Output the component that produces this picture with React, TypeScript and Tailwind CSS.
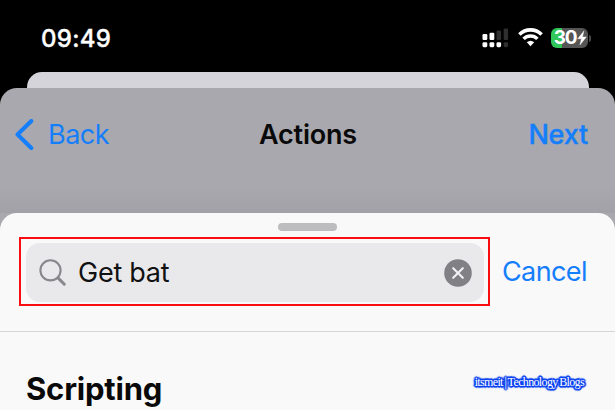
import React from "react";

function Signal() {
  return (
    <svg width="27" height="20" viewBox="0 0 27 20" fill="#fff">
      <rect x="0.5" y="6" width="4.8" height="6" rx="1.2" />
      <rect x="7.5" y="4.8" width="4.8" height="7.2" rx="1.2" />
      <rect x="14.5" y="2.5" width="4.6" height="9.5" rx="1.2" fill="#2f2f2f" />
      <rect x="21.7" y="0.5" width="4.4" height="11.5" rx="1.2" fill="#2f2f2f" />
      <rect x="0.5" y="14.2" width="4.8" height="5" rx="1.4" />
      <rect x="7.5" y="14.2" width="4.8" height="5" rx="1.4" />
      <rect x="14.5" y="14.2" width="4.6" height="5" rx="1.4" />
      <rect x="21.7" y="14.2" width="4.4" height="5" rx="1.4" fill="#2f2f2f" />
    </svg>
  );
}

function Wifi() {
  return (
    <svg width="25" height="19" viewBox="0 0 25 19" fill="none" stroke="#fff">
      <path d="M1.4 6.5 A15.6 15.6 0 0 1 23.6 6.5" strokeWidth="3.6" />
      <path d="M5.6 10.9 A9.6 9.6 0 0 1 19.4 10.9" strokeWidth="3.5" />
      <path d="M8.8 14.3 Q12.5 11.3 16.2 14.3 L12.5 18.3 Z" fill="#fff" stroke="none" />
    </svg>
  );
}

function Battery() {
  return (
    <div className="flex items-center gap-[1px]">
      <div className="flex h-5 w-[37px] items-center justify-center rounded-[6px] bg-[linear-gradient(90deg,#31c759_30%,#555555_30%)] pl-[2px]">
        <span className="text-[19px] leading-5 font-bold tracking-[-1.2px] text-white">30</span>
        <svg className="ml-[1px]" width="10" height="14" viewBox="0 0 9 14" fill="#fff" stroke="#fff" strokeWidth="0.4">
          <path d="M6.4 0 L0.2 7.8 H3.9 L2.4 14 L8.8 5.9 H5 Z" />
        </svg>
      </div>
      <div className="h-[7px] w-[2px] rounded-r-full bg-[#444444]" />
    </div>
  );
}

function StatusBar() {
  return (
    <header className="flex h-[72px] items-start justify-between pl-[41px] pr-[24px] pt-[28px]">
      <span className="mt-[-3px] text-[24px] leading-7 font-medium tracking-[0.3px] text-white [-webkit-text-stroke:0.35px_#ffffff]">09:49</span>
      <div className="flex items-start">
        <Signal />
        <div className="ml-[9px]"><Wifi /></div>
        <div className="ml-[8px]"><Battery /></div>
      </div>
    </header>
  );
}

export default function App() {
  return (
    <div className="h-[410px] w-[615px] overflow-hidden bg-black font-['Inter',sans-serif]">
      <StatusBar />
      <div className="ml-[27px] mr-[26px] h-[16px] rounded-t-[15px] bg-[#d5d4da]" />
      <main className="h-[322px] rounded-t-[17px] bg-[#a9a8ae]">
        <nav className="grid h-[125px] grid-cols-3 items-start rounded-t-[17px] bg-[linear-gradient(180deg,transparent_80%,#a2a1a7_100%)] pl-[15px] pr-[27px] pt-[31px] text-[27px] leading-8 text-[#147efb]">
          <div className="flex">
            <svg width="20" height="32" viewBox="0 0 20 32" fill="none" stroke="#147efb" strokeWidth="4" strokeLinecap="round" strokeLinejoin="round">
              <path d="M16.3 2 L2.5 15.5 L16.3 29" />
            </svg>
            <span className="ml-[13px] tracking-[-0.5px]">Back</span>
          </div>
          <h1 className="pl-[13px] text-center font-semibold tracking-[-0.2px] text-[#09090a]">Actions</h1>
          <span className="text-right font-medium tracking-[-0.2px] [-webkit-text-stroke:0.4px_#147efb]">Next</span>
        </nav>
        <section className="h-[197px] rounded-t-[17px] bg-[#f9f9f9] pt-[10px]">
          <div className="mx-auto h-2 w-[59px] rounded-full bg-[#bdbdbf]" />
          <div className="mt-[6px] flex items-center pl-[19px] pr-[27px]">
            <div className="h-[69px] w-[471px] border-2 border-[#f90d10] p-[5px] pt-[4px]">
              <div className="flex h-[59px] w-[458px] items-center rounded-[14px] bg-[#e9e9eb] pl-[12px] pr-[12px]">
                <svg width="30" height="30" viewBox="0 0 30 30" fill="none" stroke="#88888c">
                  <circle cx="12.5" cy="12.3" r="10.1" strokeWidth="2.1" />
                  <path d="M20 19.9 L26.3 26.2" strokeWidth="3" strokeLinecap="round" />
                </svg>
                <span className="ml-[10px] flex-1 text-[27px] leading-8 tracking-[-0.25px] text-[#111112]">Get bat</span>
                <svg width="28" height="28" viewBox="0 0 28 28">
                  <circle cx="14" cy="14" r="13.8" fill="#818085" />
                  <path d="M9.2 9.2 L18.8 18.8 M18.8 9.2 L9.2 18.8" stroke="#f1f1f3" strokeWidth="2.1" strokeLinecap="round" />
                </svg>
              </div>
            </div>
            <span className="ml-[12px] text-[27px] leading-8 tracking-[-0.6px] text-[#147efb]">Cancel</span>
          </div>
          <div className="mt-[25px] h-px bg-[#d6d6d8]" />
          <div className="flex items-start justify-between pl-[26px] pr-[31px]">
            <h2 className="mt-[37px] text-[31px] leading-10 font-bold tracking-[-0.2px] text-[#09090a]">Scripting</h2>
            <span className="mt-[42px] whitespace-nowrap font-['Liberation_Serif',serif] text-[12px] leading-4 tracking-[-0.65px] text-white [word-spacing:-0.7px] [text-shadow:0_0_1px_#0f45f0,0_0_1px_#0f45f0,0_0_2px_#0f45f0,0_0_2px_#0f45f0,1px_1px_1px_#0f45f0,-1px_-1px_1px_#0f45f0,1px_-1px_1px_#0f45f0,-1px_1px_1px_#0f45f0,2px_0_1px_#0f45f0,-2px_0_1px_#0f45f0,0_2px_1px_#0f45f0,0_-2px_1px_#0f45f0,1px_1px_#0f45f0,-1px_-1px_#0f45f0,1px_-1px_#0f45f0,-1px_1px_#0f45f0]">itsmeit | Technology Blogs</span>
          </div>
        </section>
      </main>
    </div>
  );
}
